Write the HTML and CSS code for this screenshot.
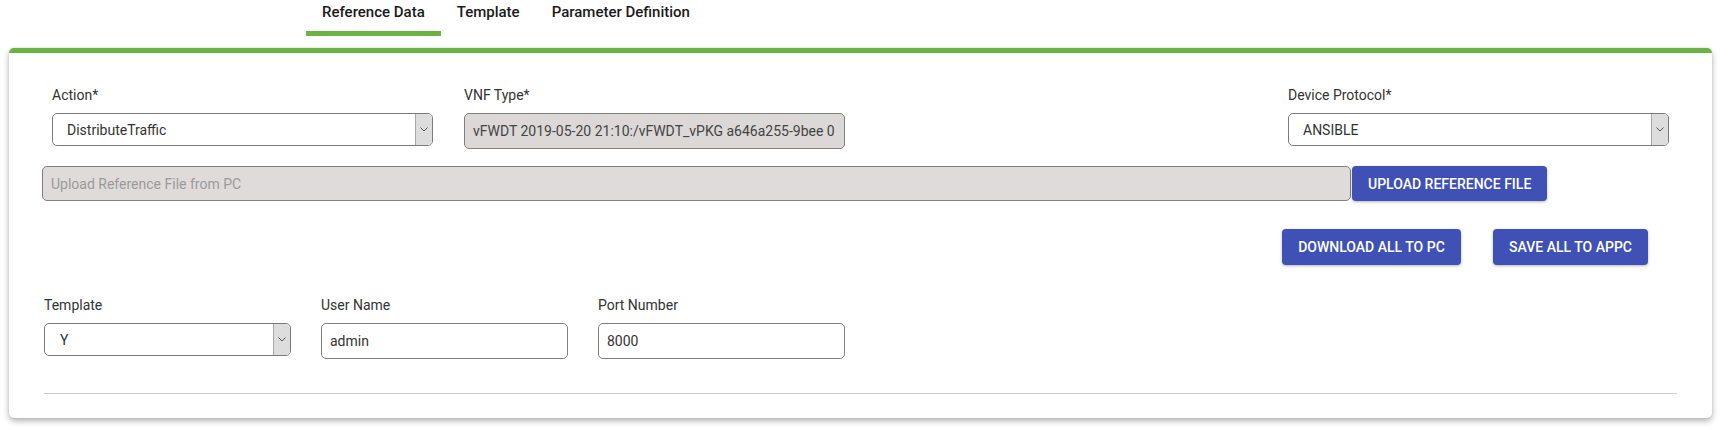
FILE: index.html
```html
<!DOCTYPE html>
<html lang="en">
<head>
<meta charset="utf-8">
<title>Reference Data</title>
<link rel="stylesheet" href="styles.css">
</head>
<body>
  <nav class="tabs">
    <div class="tab active">Reference Data</div>
    <div class="tab">Template</div>
    <div class="tab">Parameter Definition</div>
  </nav>

  <section class="card">
    <div class="row-top">
      <div class="field">
        <label class="label">Action*</label>
        <div class="select">
          <span class="select-text">DistributeTraffic</span>
          <span class="select-arrow"><svg width="8" height="5" viewBox="0 0 8 5"><path d="M0.5 0.5 L4 4 L7.5 0.5" fill="none" stroke="#555" stroke-width="1"/></svg></span>
        </div>
      </div>
      <div class="field">
        <label class="label">VNF Type*</label>
        <div class="input disabled"><span class="clip">vFWDT 2019-05-20 21:10:/vFWDT_vPKG a646a255-9bee 0</span></div>
      </div>
      <div class="field"></div>
      <div class="field">
        <label class="label">Device Protocol*</label>
        <div class="select">
          <span class="select-text">ANSIBLE</span>
          <span class="select-arrow"><svg width="8" height="5" viewBox="0 0 8 5"><path d="M0.5 0.5 L4 4 L7.5 0.5" fill="none" stroke="#555" stroke-width="1"/></svg></span>
        </div>
      </div>
    </div>

    <div class="upload-row">
      <div class="input upload placeholder">Upload Reference File from PC</div>
      <button class="btn upload-btn">UPLOAD REFERENCE FILE</button>
    </div>

    <div class="actions">
      <button class="btn">DOWNLOAD ALL TO PC</button>
      <button class="btn">SAVE ALL TO APPC</button>
    </div>

    <div class="row-bottom">
      <div class="field">
        <label class="label">Template</label>
        <div class="select">
          <span class="select-text">Y</span>
          <span class="select-arrow"><svg width="8" height="5" viewBox="0 0 8 5"><path d="M0.5 0.5 L4 4 L7.5 0.5" fill="none" stroke="#555" stroke-width="1"/></svg></span>
        </div>
      </div>
      <div class="field">
        <label class="label">User Name</label>
        <div class="input">admin</div>
      </div>
      <div class="field">
        <label class="label">Port Number</label>
        <div class="input">8000</div>
      </div>
    </div>

    <hr class="divider">
  </section>
</body>
</html>
```

FILE: styles.css
```css
* { box-sizing: border-box; }

html, body {
  background: #ffffff;
}

body {
  margin: 0;
  padding-bottom: 15px;
  font-family: Roboto, "Liberation Sans", Arial, sans-serif;
  color: #333333;
}

.tabs {
  display: flex;
  padding-left: 306px;
  height: 36px;
}

.tab {
  padding: 2px 16px 9px;
  line-height: 20px;
  font-size: 15px;
  font-weight: 500;
  color: #1a1a1a;
  border-bottom: 5px solid transparent;
}

.tab.active {
  border-bottom-color: #6ab344;
}

.card {
  margin: 12px 9px 0;
  height: 370px;
  border-top: 5px solid #6ab344;
  border-radius: 5px;
  background: #ffffff;
  box-shadow: 0 3px 6px rgba(0, 0, 0, 0.3), 0 0 2px rgba(0, 0, 0, 0.12);
  padding: 32px 35px 0 35px;
}

.field {
  display: flex;
  flex-direction: column;
}

.label {
  font-size: 14px;
  line-height: 20px;
  color: #333333;
  margin-bottom: 8px;
}

.row-top {
  display: grid;
  grid-template-columns: repeat(4, 381px);
  column-gap: 31px;
  margin-left: 8px;
  align-items: start;
}

.select {
  display: flex;
  align-items: stretch;
  height: 33px;
  border: 1px solid #7a7a7a;
  border-radius: 5px;
  background: #ffffff;
  overflow: hidden;
}

.select-text {
  flex: 1;
  display: flex;
  align-items: center;
  padding-left: 14px;
  font-size: 14px;
  color: #333333;
}

.select-arrow {
  width: 17px;
  display: flex;
  align-items: center;
  justify-content: center;
  background: #dddddd;
  border-left: 1px solid #a8a8a8;
}

.input {
  display: flex;
  align-items: center;
  height: 36px;
  border: 1px solid #7f7f7f;
  border-radius: 5px;
  background: #ffffff;
  padding: 0 8px;
  font-size: 14px;
  color: #333333;
  white-space: nowrap;
  overflow: hidden;
}

.input.disabled {
  background: #dcd8d8;
  color: #444444;
}

.clip {
  overflow: hidden;
}

.upload-row {
  display: flex;
  margin-top: 17px;
  margin-left: -2px;
  height: 35px;
}

.input.upload {
  width: 1309px;
  height: 35px;
  background: #e0dbdb;
}

.placeholder {
  color: #9a9a9a;
}

.btn {
  font-family: Roboto, "Liberation Sans", Arial, sans-serif;
  font-size: 14px;
  font-weight: 500;
  color: #ffffff;
  background: #3f51b5;
  border: none;
  border-radius: 4px;
  padding: 0 16px;
  height: 36px;
  box-shadow: 0 1px 3px rgba(0, 0, 0, 0.3);
  white-space: nowrap;
}

.upload-btn {
  margin-left: 1px;
  height: 35px;
  width: 195px;
}

.actions {
  display: flex;
  justify-content: flex-end;
  gap: 32px;
  margin-top: 28px;
  padding-right: 29px;
}

.actions .btn:first-child { width: 179px; }
.actions .btn:last-child { width: 155px; }

.row-bottom {
  display: grid;
  grid-template-columns: repeat(3, 247px);
  column-gap: 30px;
  margin-top: 30px;
  align-items: start;
}

.row-bottom .select-text {
  padding-left: 15px;
}

.divider {
  margin: 34px 0 0;
  border: none;
  border-top: 1px solid #cccccc;
  height: 0;
}
```
